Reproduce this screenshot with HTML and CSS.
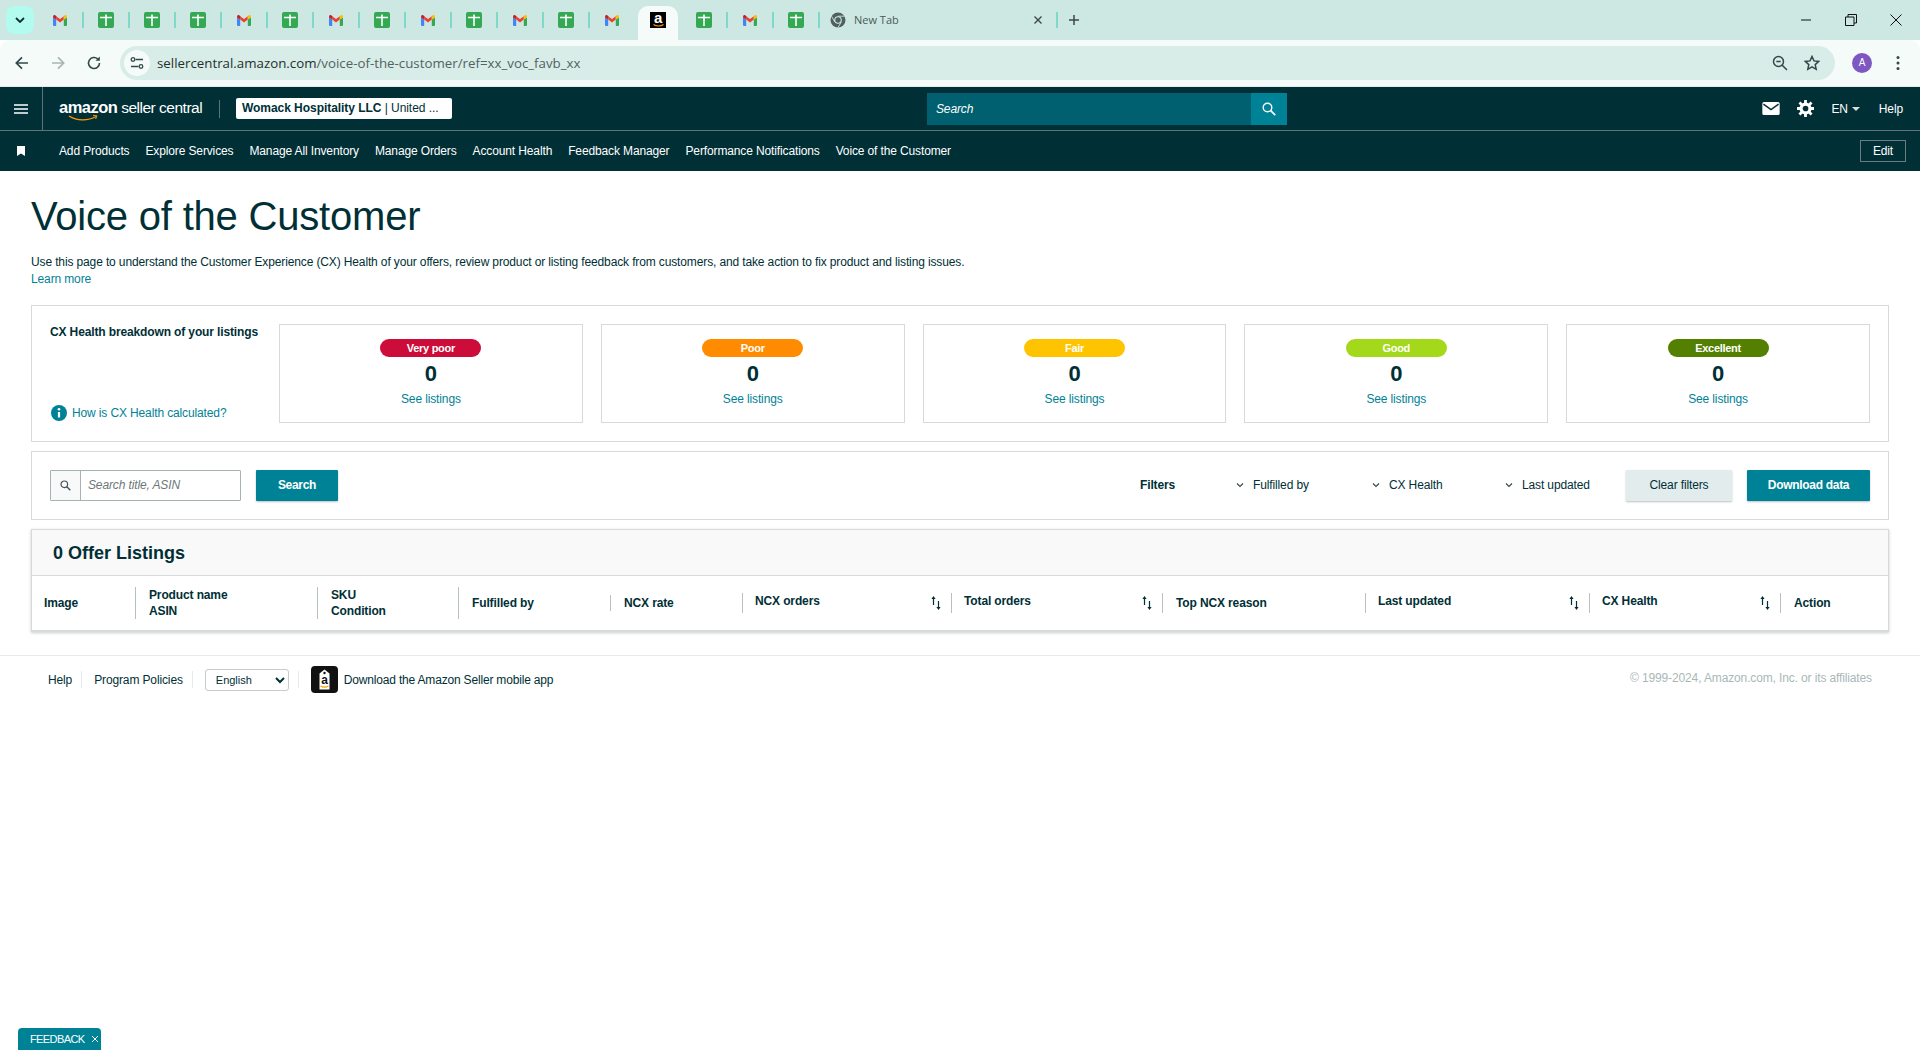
FILE: index.html
```html
<!DOCTYPE html>
<html lang="en">
<head>
<meta charset="utf-8">
<title>Voice of the Customer</title>
<link rel="stylesheet" href="styles.css">
</head>
<body>

<svg class="defs" width="0" height="0">
	<symbol id="gmail" viewBox="0 0 14 11">
		<path d="M0 2.500V10a1 1 0 0 0 1 1h2.200V4.600z" fill="#4285f4"/>
		<path d="M14 2.500V10a1 1 0 0 1-1 1h-2.200V4.600z" fill="#34a853"/>
		<path d="M3.200 4.600V1.200L7 4l3.800-2.800v3.400L7 7.500z" fill="#ea4335"/>
		<path d="M0 2.500 0 1.600C0 .4 1.500-.4 2.500.4l.7.8v3.400z" fill="#c5221f"/>
		<path d="M14 2.500V1.600c0-1.200-1.500-2-2.500-1.200l-.7.8v3.400z" fill="#fbbc04"/>
	</symbol>
	<symbol id="sheet" viewBox="0 0 16 16">
		<rect width="16" height="16" rx="2" fill="#34a853"/>
		<path d="M2 5.500h12M8 2.500V14" stroke="#fff" stroke-width="1.600" fill="none"/>
	</symbol>
	<symbol id="sort" viewBox="0 0 10 14">
		<path d="M2.500 0 .4 3h1.500v6h1.200V3h1.500z" fill="#002f36"/>
		<path d="M7.500 14 5.400 11h1.500V5h1.200v6h1.500z" fill="#002f36"/>
	</symbol>
	<symbol id="chev" viewBox="0 0 8 6">
		<path d="M1 1.500 4 4.500 7 1.500" stroke="#33464b" stroke-width="1.100" fill="none"/>
	</symbol>
</svg>

<div class="tabstrip">
	<div class="tabsearch"><svg width="10" height="6" viewBox="0 0 10 6"><path d="M1 1l4 4 4-4" stroke="#10302c" stroke-width="1.800" fill="none"/></svg></div>
	<div class="tab"><svg class="ic-gmail"><use href="#gmail"/></svg></div>
	<div class="tab"><svg class="ic-sheet"><use href="#sheet"/></svg></div>
	<div class="tab"><svg class="ic-sheet"><use href="#sheet"/></svg></div>
	<div class="tab"><svg class="ic-sheet"><use href="#sheet"/></svg></div>
	<div class="tab"><svg class="ic-gmail"><use href="#gmail"/></svg></div>
	<div class="tab"><svg class="ic-sheet"><use href="#sheet"/></svg></div>
	<div class="tab"><svg class="ic-gmail"><use href="#gmail"/></svg></div>
	<div class="tab"><svg class="ic-sheet"><use href="#sheet"/></svg></div>
	<div class="tab"><svg class="ic-gmail"><use href="#gmail"/></svg></div>
	<div class="tab"><svg class="ic-sheet"><use href="#sheet"/></svg></div>
	<div class="tab"><svg class="ic-gmail"><use href="#gmail"/></svg></div>
	<div class="tab"><svg class="ic-sheet"><use href="#sheet"/></svg></div>
	<div class="tab tab-noline"><svg class="ic-gmail"><use href="#gmail"/></svg></div>
	<div class="tab tab-active"><span class="az-fav">a<svg width="11" height="3" viewBox="0 0 11 3"><path d="M.5.500C3 2.500 8 2.500 10.500.5" stroke="#f90" stroke-width="1.100" fill="none"/></svg></span></div>
	<div class="tab"><svg class="ic-sheet"><use href="#sheet"/></svg></div>
	<div class="tab"><svg class="ic-gmail"><use href="#gmail"/></svg></div>
	<div class="tab"><svg class="ic-sheet"><use href="#sheet"/></svg></div>
	<div class="tab tab-new">
		<svg width="16" height="16" viewBox="0 0 16 16">
			<circle cx="8" cy="8" r="7.500" fill="#50605c"/>
			<circle cx="8" cy="8" r="3.800" fill="#cde8e2"/>
			<circle cx="8" cy="8" r="2.700" fill="#50605c"/>
			<path d="M8 4.200h6.600M4.700 9.900 1.600 4.300M11.300 9.900 8 15.500" stroke="#cde8e2" stroke-width=".9" fill="none"/>
		</svg>
		<span class="tab-title">New Tab</span>
		<svg class="tab-x" width="10" height="10" viewBox="0 0 10 10"><path d="M1.500 1.500l7 7M8.500 1.500l-7 7" stroke="#3c4a47" stroke-width="1.400"/></svg>
	</div>
	<svg class="newtab" width="12" height="12" viewBox="0 0 12 12"><path d="M6 1v10M1 6h10" stroke="#3c4a47" stroke-width="1.500"/></svg>
	<div class="winctl">
		<svg width="12" height="12" viewBox="0 0 12 12"><path d="M1 6h10" stroke="#111" stroke-width="1"/></svg>
		<svg width="12" height="12" viewBox="0 0 12 12"><path d="M.5 3h8.500v8.500H.5zM3 3V.5h8.500V9H9" stroke="#111" stroke-width="1" fill="none"/></svg>
		<svg width="12" height="12" viewBox="0 0 12 12"><path d="M.5.500l11 11M11.500.5l-11 11" stroke="#111" stroke-width="1"/></svg>
	</div>
</div>

<div class="toolbar">
	<svg class="navbtn" width="16" height="16" viewBox="0 0 16 16"><path d="M14 8H2.500M8 2.300 2.300 8 8 13.700" stroke="#33484a" stroke-width="1.700" fill="none"/></svg>
	<svg class="navbtn" width="16" height="16" viewBox="0 0 16 16"><path d="M2 8h11.500M8 2.300 13.700 8 8 13.700" stroke="#a9b5b2" stroke-width="1.700" fill="none"/></svg>
	<svg class="navbtn" width="16" height="16" viewBox="0 0 16 16"><path d="M13.500 8A5.500 5.500 0 1 1 11.800 4" stroke="#33484a" stroke-width="1.600" fill="none"/><path d="M13.800 1.500v4.300H9.500z" fill="#33484a"/></svg>
	<div class="omnibox">
		<span class="site-icon"><svg width="14" height="14" viewBox="0 0 14 14"><path d="M5.500 3.500H13M1 10.500h7.500" stroke="#33484a" stroke-width="1.400"/><circle cx="3" cy="3.500" r="1.800" fill="none" stroke="#33484a" stroke-width="1.300"/><circle cx="11" cy="10.500" r="1.800" fill="none" stroke="#33484a" stroke-width="1.300"/></svg></span>
		<span class="url">sellercentral.amazon.com<span class="url-path">/voice-of-the-customer/ref=xx_voc_favb_xx</span></span>
		<svg class="omni-zoom" width="16" height="16" viewBox="0 0 16 16"><circle cx="6.500" cy="6.500" r="5" fill="none" stroke="#33484a" stroke-width="1.500"/><path d="M10 10l5 5M4.300 6.500h4.400" stroke="#33484a" stroke-width="1.500"/></svg>
		<svg class="omni-star" width="16" height="16" viewBox="0 0 16 16"><path d="M8 1.500l2 4.400 4.800.5-3.600 3.200 1 4.700L8 11.900l-4.200 2.400 1-4.700L1.200 6.400 6 5.900z" fill="none" stroke="#33484a" stroke-width="1.500"/></svg>
	</div>
	<span class="avatar">A</span>
	<svg class="kebab" width="4" height="16" viewBox="0 0 4 16"><circle cx="2" cy="2.500" r="1.500" fill="#33484a"/><circle cx="2" cy="8" r="1.500" fill="#33484a"/><circle cx="2" cy="13.500" r="1.500" fill="#33484a"/></svg>
</div>

<header class="topbar">
	<div class="burger"><svg width="14" height="10" viewBox="0 0 14 10"><path d="M0 1h14M0 5h14M0 9h14" stroke="#fff" stroke-width="1.500"/></svg></div>
	<div class="logo">
		<span class="logo-word"><b>amazon</b> seller central</span>
		<svg class="logo-smile" width="30" height="6" viewBox="0 0 30 6"><path d="M1 1c8 5 19 5 27 .5" stroke="#f90" stroke-width="1.300" fill="none"/><path d="M25 .5l4 .3-1.400 3.200" stroke="#f90" stroke-width="1" fill="none"/></svg>
	</div>
	<div class="account"><b>Womack Hospitality LLC</b> | United ...</div>
	<div class="topsearch">
		<span class="topsearch-text">Search</span>
		<span class="topsearch-btn"><svg width="14" height="14" viewBox="0 0 14 14"><circle cx="5.500" cy="5.500" r="4.300" fill="none" stroke="#fff" stroke-width="1.400"/><path d="M8.700 8.700l4.500 4.500" stroke="#fff" stroke-width="1.700"/></svg></span>
	</div>
	<div class="topright">
		<svg class="ic-mail" width="18" height="13" viewBox="0 0 16 12"><rect width="16" height="12" rx="1.500" fill="#fff"/><path d="M1 2l7 5 7-5" stroke="#002f36" stroke-width="1.300" fill="none"/></svg>
		<svg class="ic-gear" width="17" height="17" viewBox="0 0 16 16"><circle cx="8" cy="8" r="4.200" fill="none" stroke="#fff" stroke-width="3"/><path d="M8 0v3M8 13v3M0 8h3M13 8h3M2.300 2.300l2.200 2.200M11.500 11.500l2.200 2.200M13.700 2.300l-2.200 2.200M4.500 11.500l-2.200 2.200" stroke="#fff" stroke-width="2.600"/></svg>
		<span class="lang">EN<i class="caret"></i></span>
		<span>Help</span>
	</div>
</header>

<nav class="navbar">
	<svg class="bookmark" width="8" height="10" viewBox="0 0 8 10"><path d="M0 0h8v10L4 7.500 0 10z" fill="#fff"/></svg>
	<a>Add Products</a>
	<a>Explore Services</a>
	<a>Manage All Inventory</a>
	<a>Manage Orders</a>
	<a>Account Health</a>
	<a>Feedback Manager</a>
	<a>Performance Notifications</a>
	<a>Voice of the Customer</a>
	<span class="edit">Edit</span>
</nav>

<main class="page">
	<h1>Voice of the Customer</h1>
	<p class="intro">Use this page to understand the Customer Experience (CX) Health of your offers, review product or listing feedback from customers, and take action to fix product and listing issues.<br><a class="link">Learn more</a></p>

	<section class="panel breakdown">
		<div class="breakdown-side">
			<b>CX Health breakdown of your listings</b>
			<div class="howis">
				<svg width="16" height="16" viewBox="0 0 16 16"><circle cx="8" cy="8" r="8" fill="#008296"/><circle cx="8" cy="4.300" r="1.300" fill="#fff"/><path d="M8 7v5.500" stroke="#fff" stroke-width="2.200"/></svg>
				<a class="link">How is CX Health calculated?</a>
			</div>
		</div>
		<div class="hcard"><span class="pill verypoor">Very poor</span><span class="count">0</span><a class="link">See listings</a></div>
		<div class="hcard"><span class="pill poor">Poor</span><span class="count">0</span><a class="link">See listings</a></div>
		<div class="hcard"><span class="pill fair">Fair</span><span class="count">0</span><a class="link">See listings</a></div>
		<div class="hcard"><span class="pill good">Good</span><span class="count">0</span><a class="link">See listings</a></div>
		<div class="hcard"><span class="pill excellent">Excellent</span><span class="count">0</span><a class="link">See listings</a></div>
	</section>

	<section class="panel filterbar">
		<div class="searchbox">
			<span class="searchbox-icon"><svg width="11" height="11" viewBox="0 0 11 11"><circle cx="4.300" cy="4.300" r="3.300" fill="none" stroke="#44555a" stroke-width="1.200"/><path d="M6.800 6.800l3.500 3.500" stroke="#44555a" stroke-width="1.400"/></svg></span>
			<span class="searchbox-text">Search title, ASIN</span>
		</div>
		<button class="btn btn-teal btn-search">Search</button>
		<div class="filters">
			<b>Filters</b>
			<span class="filter"><svg width="8" height="6"><use href="#chev"/></svg>Fulfilled by</span>
			<span class="filter"><svg width="8" height="6"><use href="#chev"/></svg>CX Health</span>
			<span class="filter"><svg width="8" height="6"><use href="#chev"/></svg>Last updated</span>
		</div>
		<button class="btn btn-grey">Clear filters</button>
		<button class="btn btn-teal btn-download">Download data</button>
	</section>

	<section class="listing">
		<h2>0 Offer Listings</h2>
		<div class="listing-head">
			<div class="cell cell-first">Image</div>
			<div class="cell">Product name<br>ASIN</div>
			<div class="cell">SKU<br>Condition</div>
			<div class="cell cell-tall">Fulfilled by</div>
			<div class="cell">NCX rate</div>
			<div class="cell cell-sort">NCX orders<svg width="10" height="14"><use href="#sort"/></svg></div>
			<div class="cell cell-sort">Total orders<svg width="10" height="14"><use href="#sort"/></svg></div>
			<div class="cell cell-tallish">Top NCX reason</div>
			<div class="cell cell-sort">Last updated<svg width="10" height="14"><use href="#sort"/></svg></div>
			<div class="cell cell-sort">CX Health<svg width="10" height="14"><use href="#sort"/></svg></div>
			<div class="cell cell-tallish">Action</div>
		</div>
	</section>
</main>

<footer class="foot">
	<a class="foot-item">Help</a>
	<a class="foot-item">Program Policies</a>
	<div class="foot-item"><select class="langselect"><option>English</option></select></div>
	<div class="foot-app">
		<svg class="app-icon" width="27" height="27" viewBox="0 0 27 27">
			<rect width="27" height="27" rx="4" fill="#111"/>
			<path d="M13.500 3.500 18.500 7.500V23.500H8.500V7.500z" fill="#fff"/>
			<circle cx="13.500" cy="7" r="1.200" fill="#111"/>
			<text x="13.500" y="18" class="app-a">a</text>
			<path d="M9.500 20c2.500 1.500 5.500 1.500 8 0" stroke="#f90" stroke-width="1.200" fill="none"/>
		</svg>
		<a>Download the Amazon Seller mobile app</a>
	</div>
	<span class="copyright">© 1999-2024, Amazon.com, Inc. or its affiliates</span>
</footer>

<div class="feedback">FEEDBACK<svg width="8" height="8" viewBox="0 0 8 8"><path d="M1 1l6 6M7 1l-6 6" stroke="#fff" stroke-width="1"/></svg></div>

</body>
</html>
```

FILE: styles.css
```css
* {
	box-sizing: border-box;
}
body {
	margin: 0;
	background: #fff;
	color: #002f36;
	font-family: "Liberation Sans", Arial, sans-serif;
	font-size: 12px;
	letter-spacing: -.13px;
	line-height: 16px;
}
.defs {
	display: block;
	height: 0;
}

/* browser chrome */
.tabstrip {
	display: flex;
	align-items: center;
	height: 40px;
	background: #cde8e2;
}
.tabsearch {
	display: flex;
	align-items: center;
	justify-content: center;
	width: 28px;
	height: 28px;
	margin: 0 4px 0 6px;
	background: #b3fbef;
	border-radius: 8px;
}
.tab {
	display: flex;
	align-items: center;
	justify-content: center;
	width: 46px;
	height: 16px;
	border-right: 2px solid #7fd8cb;
}
.tab-noline {
	padding-right: 2px;
	border-right: none;
}
.tab-active {
	align-self: flex-end;
	width: 40px;
	height: 34px;
	margin: 0 4px 0 2px;
	padding-bottom: 6px;
	background: #f4fbf8;
	border-right: none;
	border-radius: 10px 10px 0 0;
}
.ic-gmail {
	width: 14px;
	height: 11px;
}
.ic-sheet {
	width: 16px;
	height: 16px;
}
.az-fav {
	display: flex;
	flex-direction: column;
	align-items: center;
	width: 16px;
	height: 16px;
	background: #000;
	color: #fff;
	font-size: 15px;
	font-weight: bold;
	line-height: 12px;
}
.tab-new {
	justify-content: flex-start;
	width: 238px;
	padding-left: 10px;
}
.tab-title {
	margin-left: 8px;
	color: #4a5a57;
	font-family: "Open Sans", sans-serif;
	font-size: 11px;
	letter-spacing: 0;
}
.tab-x {
	margin-left: auto;
	margin-right: 13px;
}
.newtab {
	margin-left: 10px;
}
.winctl {
	display: flex;
	gap: 33px;
	margin-left: auto;
	margin-right: 18px;
}
.toolbar {
	display: flex;
	align-items: center;
	height: 47px;
	padding: 0 20px 1px 14px;
	background: #f4fbf8;
	border-radius: 10px 10px 0 0;
	border-bottom: 1px solid #e3ecea;
}
.navbtn {
	margin-right: 20px;
}
.omnibox {
	display: flex;
	align-items: center;
	flex: 1;
	height: 34px;
	margin-left: -2px;
	padding-left: 4px;
	background: #d9ede8;
	border-radius: 17px;
}
.site-icon {
	display: flex;
	align-items: center;
	justify-content: center;
	width: 26px;
	height: 26px;
	background: #f4fbf8;
	border-radius: 50%;
}
.url {
	margin-left: 7px;
	color: #1f2f2d;
	font-family: "Open Sans", sans-serif;
	font-size: 13.300px;
	letter-spacing: 0;
}
.url-path {
	color: #52625f;
}
.omni-zoom {
	margin-left: auto;
}
.omni-star {
	margin-left: 16px;
	margin-right: 15px;
}
.avatar {
	width: 20px;
	height: 20px;
	margin: 0 0 0 17px;
	background: #7e57c2;
	border-radius: 50%;
	color: #fff;
	font-size: 10px;
	line-height: 20px;
	text-align: center;
}
.kebab {
	margin-left: 24px;
}

/* seller central header */
.topbar {
	display: flex;
	align-items: center;
	height: 44px;
	background: #002f36;
	border-bottom: 1px solid #5f7276;
	color: #fff;
}
.burger {
	display: flex;
	align-items: center;
	justify-content: center;
	width: 43px;
	height: 43px;
	border-right: 1px solid #5f7276;
}
.logo {
	display: flex;
	flex-direction: column;
	width: 161px;
	height: 18px;
	margin-left: 16px;
	padding-right: 16px;
	border-right: 1px solid #5f7276;
}
.logo-word {
	margin-top: -2px;
	font-size: 15.500px;
	line-height: 18px;
	letter-spacing: -.5px;
	white-space: nowrap;
}
.logo-word b {
	font-size: 16.500px;
}
.logo-smile {
	flex: none;
	margin: -2px 0 0 9px;
}
.account {
	width: 216px;
	height: 21px;
	margin-left: 16px;
	padding-left: 6px;
	background: #fff;
	border-radius: 2px;
	color: #002f36;
	letter-spacing: -.05px;
	line-height: 21px;
	white-space: nowrap;
}
.topsearch {
	display: flex;
	width: 360px;
	height: 32px;
	margin-left: 475px;
	background: #00606f;
}
.topsearch-text {
	flex: 1;
	padding-left: 9px;
	font-style: italic;
	line-height: 32px;
}
.topsearch-btn {
	display: flex;
	align-items: center;
	justify-content: center;
	width: 36px;
	background: #008296;
}
.topright {
	display: flex;
	align-items: center;
	gap: 18px;
	margin-left: auto;
	padding-right: 17px;
}
.ic-gear {
	margin-left: -1px;
}
.lang {
	display: flex;
	align-items: center;
	margin-left: -1px;
	margin-right: 1px;
}
.caret {
	width: 0;
	height: 0;
	margin-left: 4px;
	border: 4px solid transparent;
	border-top-color: #ddd;
	border-bottom: none;
}
.navbar {
	display: flex;
	align-items: center;
	gap: 16px;
	height: 40px;
	padding: 0 14px 0 17px;
	background: #002f36;
	color: #fff;
	letter-spacing: -.13px;
}
.bookmark {
	margin-right: 18px;
}
.edit {
	width: 46px;
	height: 22px;
	margin-left: auto;
	border: 1px solid #6b7d81;
	line-height: 20px;
	text-align: center;
}

/* page */
.page {
	padding: 21px 31px 0;
}
h1 {
	margin: 0;
	font-size: 40px;
	font-weight: normal;
	letter-spacing: -.2px;
	line-height: 48px;
}
.intro {
	margin: 14px 0 17px;
	line-height: 17px;
}
.link {
	color: #008296;
}
.panel {
	border: 1px solid #d5dbdb;
}
.breakdown {
	display: flex;
	gap: 18px;
	padding: 18px;
}
.breakdown-side {
	display: flex;
	flex-direction: column;
	justify-content: space-between;
	flex: none;
	width: 211px;
	padding-bottom: 2px;
	white-space: nowrap;
}
.howis {
	display: flex;
	align-items: center;
	gap: 5px;
	margin-left: 1px;
}
.hcard {
	display: flex;
	flex-direction: column;
	align-items: center;
	flex: 1;
	height: 99px;
	padding-top: 14px;
	border: 1px solid #d5dbdb;
}
.pill {
	width: 101px;
	height: 18px;
	border-radius: 9px;
	color: #fff;
	font-size: 11px;
	font-weight: bold;
	letter-spacing: -.3px;
	line-height: 18px;
	text-align: center;
}
.verypoor {
	background: #cc0c39;
}
.poor {
	background: #ff8c00;
}
.fair {
	background: #ffc400;
}
.good {
	background: #a4d81b;
}
.excellent {
	background: #538000;
}
.count {
	margin: 5px 0 5px;
	font-size: 22px;
	font-weight: bold;
	line-height: 24px;
}
.filterbar {
	display: flex;
	align-items: center;
	height: 69px;
	margin: 9px 0;
	padding: 0 18px;
}
.searchbox {
	display: flex;
	width: 191px;
	height: 31px;
	border: 1px solid #a6b2b3;
	border-radius: 1px;
}
.searchbox-icon {
	display: flex;
	align-items: center;
	justify-content: center;
	width: 30px;
	background: #f8f9f9;
	border-right: 1px solid #a6b2b3;
}
.searchbox-text {
	padding-left: 7px;
	color: #6c7778;
	font-style: italic;
	line-height: 29px;
}
.btn {
	height: 31px;
	padding: 0 0 1px;
	border: none;
	border-radius: 1px;
	box-shadow: 0 1px 2px rgba(0, 0, 0, .25);
	font-family: inherit;
	font-size: 12px;
	font-weight: bold;
	letter-spacing: -.3px;
}
.btn-teal {
	background: #008296;
	color: #fff;
}
.btn-search {
	width: 82px;
	margin-left: 15px;
}
.btn-grey {
	width: 106px;
	background: #e3ecec;
	color: #002f36;
	font-weight: normal;
	letter-spacing: -.13px;
}
.btn-download {
	width: 123px;
	margin-left: 15px;
}
.filters {
	display: grid;
	grid-template-columns: 95px 136px 133px 107px;
	align-items: center;
	margin: 0 15px 1px auto;
}
.filter {
	display: flex;
	align-items: center;
	gap: 9px;
	padding-left: 1px;
}
.listing {
	height: 103px;
	border: 1px solid #d5dbdb;
	border-bottom-width: 2px;
	box-shadow: 0 1px 3px rgba(0, 0, 0, .2);
}
.listing h2 {
	height: 46px;
	margin: 0;
	padding-left: 21px;
	background: #f9f9f9;
	border-bottom: 1px solid #d5dbdb;
	font-size: 18px;
	font-weight: bold;
	letter-spacing: 0;
	line-height: 47px;
}
.listing-head {
	display: grid;
	grid-template-columns: 103px 182px 141px 152px 132px 209px 211px 203px 224px 191px 1fr;
	align-items: center;
	height: 54px;
	font-weight: bold;
}
.cell {
	padding-left: 13px;
	border-left: 1px solid #b5c0c1;
}
.cell-first {
	padding-left: 12px;
	border-left: none;
}
.cell-tall {
	height: 32px;
	line-height: 32px;
}
.cell-sort {
	display: flex;
	justify-content: space-between;
	height: 20px;
	padding-left: 12px;
	padding-right: 10px;
}
.cell-sort svg {
	margin-top: 3px;
}
.cell-tallish {
	height: 20px;
	line-height: 20px;
}

/* footer */
.foot {
	display: flex;
	align-items: center;
	height: 50px;
	margin-top: 23px;
	padding: 0 48px 2px;
	border-top: 1px solid #e7e9e9;
}
.foot-item {
	display: flex;
	align-items: center;
	height: 17px;
	margin-right: 12px;
	padding-right: 9px;
	border-right: 1px solid #e7e9e9;
}
.langselect {
	width: 84px;
	height: 22px;
	padding-left: 6px;
	background: #fff;
	border: 1px solid #c4cccc;
	border-radius: 3px;
	color: #002f36;
	font-family: inherit;
	font-size: 11px;
}
.foot-app {
	display: flex;
	align-items: center;
	gap: 6px;
	letter-spacing: -.18px;
}
.app-a {
	fill: #111;
	font-size: 12px;
	font-weight: bold;
	text-anchor: middle;
}
.copyright {
	margin-left: auto;
	margin-bottom: 3px;
	color: #aab7b8;
}
.feedback {
	position: fixed;
	left: 18px;
	bottom: 0;
	display: flex;
	align-items: center;
	gap: 6px;
	width: 83px;
	height: 22px;
	padding-left: 12px;
	background: #008296;
	border-radius: 4px 4px 0 0;
	color: #fff;
	font-size: 11px;
	letter-spacing: -.6px;
	white-space: nowrap;
}
```
